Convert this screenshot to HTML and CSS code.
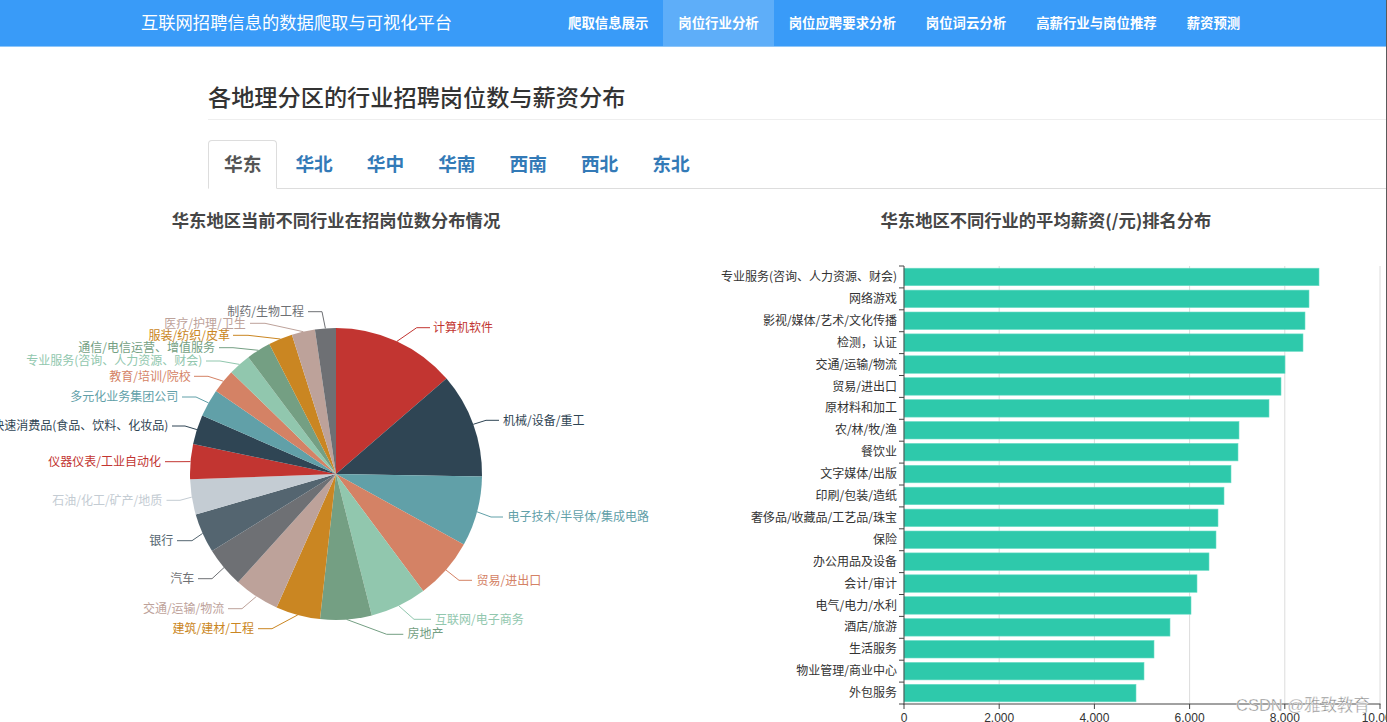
FILE: index.html
```html
<!DOCTYPE html>
<html lang="zh-CN">
<head>
<meta charset="utf-8">
<title>岗位行业分析</title>
<link rel="stylesheet" href="styles.css">
</head>
<body>
<div class="page">
  <header class="topbar">
    <div class="brand">互联网招聘信息的数据爬取与可视化平台</div>
    <nav class="nav">
      <a class="nav-item">爬取信息展示</a>
      <a class="nav-item active">岗位行业分析</a>
      <a class="nav-item">岗位应聘要求分析</a>
      <a class="nav-item">岗位词云分析</a>
      <a class="nav-item">高薪行业与岗位推荐</a>
      <a class="nav-item">薪资预测</a>
    </nav>
  </header>

  <main class="content">
    <h3 class="page-title">各地理分区的行业招聘岗位数与薪资分布</h3>
    <ul class="tabs">
      <li class="tab active"><a>华东</a></li>
      <li class="tab"><a>华北</a></li>
      <li class="tab"><a>华中</a></li>
      <li class="tab"><a>华南</a></li>
      <li class="tab"><a>西南</a></li>
      <li class="tab"><a>西北</a></li>
      <li class="tab"><a>东北</a></li>
    </ul>
  </main>

  <section class="charts">
    <svg class="chart chart-pie" width="691" height="534" viewBox="0 188 691 534">
      <text class="chart-title" x="336" y="221">华东地区当前不同行业在招岗位数分布情况</text>
      <g class="slices">
        <path fill="#c23531" d="M336 473 L336 327 A146 146 0 0 1 446.5 377.6 Z"/>
        <path fill="#2f4554" d="M336 473 L446.5 377.6 A146 146 0 0 1 482 475.5 Z"/>
        <path fill="#61a0a8" d="M336 473 L482 475.5 A146 146 0 0 1 463.8 543.6 Z"/>
        <path fill="#d48265" d="M336 473 L463.8 543.6 A146 146 0 0 1 423.2 590.1 Z"/>
        <path fill="#91c7ae" d="M336 473 L423.2 590.1 A146 146 0 0 1 371.8 614.5 Z"/>
        <path fill="#749f83" d="M336 473 L371.8 614.5 A146 146 0 0 1 320 618.1 Z"/>
        <path fill="#ca8622" d="M336 473 L320 618.1 A146 146 0 0 1 276.6 606.4 Z"/>
        <path fill="#bda29a" d="M336 473 L276.6 606.4 A146 146 0 0 1 238.1 581.3 Z"/>
        <path fill="#6e7074" d="M336 473 L238.1 581.3 A146 146 0 0 1 212 550.1 Z"/>
        <path fill="#546570" d="M336 473 L212 550.1 A146 146 0 0 1 195.7 513.5 Z"/>
        <path fill="#c4ccd3" d="M336 473 L195.7 513.5 A146 146 0 0 1 190.1 478.3 Z"/>
        <path fill="#c23531" d="M336 473 L190.1 478.3 A146 146 0 0 1 193.1 443.1 Z"/>
        <path fill="#2f4554" d="M336 473 L193.1 443.1 A146 146 0 0 1 202.2 414.6 Z"/>
        <path fill="#61a0a8" d="M336 473 L202.2 414.6 A146 146 0 0 1 216 389.9 Z"/>
        <path fill="#d48265" d="M336 473 L216 389.9 A146 146 0 0 1 231.3 371.2 Z"/>
        <path fill="#91c7ae" d="M336 473 L231.3 371.2 A146 146 0 0 1 248.3 356.2 Z"/>
        <path fill="#749f83" d="M336 473 L248.3 356.2 A146 146 0 0 1 269.3 343.1 Z"/>
        <path fill="#ca8622" d="M336 473 L269.3 343.1 A146 146 0 0 1 291.9 333.8 Z"/>
        <path fill="#bda29a" d="M336 473 L291.9 333.8 A146 146 0 0 1 314.9 328.5 Z"/>
        <path fill="#6e7074" d="M336 473 L314.9 328.5 A146 146 0 0 1 336 327 Z"/>
      </g>
      <g class="leaders">
        <polyline stroke="#c23531" points="397,340.3 416.7,326.7 430,326.7"/>
        <polyline stroke="#2f4554" points="473.3,423.3 486,419.3 499,419.3"/>
        <polyline stroke="#61a0a8" points="477,510.8 491,516 503,516"/>
        <polyline stroke="#d48265" points="446,569 459,579.3 472,579.3"/>
        <polyline stroke="#91c7ae" points="398.8,604.8 414,618.3 431,618.3"/>
        <polyline stroke="#749f83" points="346.5,618.4 386.7,633.3 403.3,633.3"/>
        <polyline stroke="#ca8622" points="297.8,613.9 272,627.7 258,627.7"/>
        <polyline stroke="#bda29a" points="256.4,595.4 242,607.7 228,607.7"/>
        <polyline stroke="#6e7074" points="224,566.6 212,577.7 198,577.7"/>
        <polyline stroke="#546570" points="202.6,532.4 192,539.7 177,539.7"/>
        <polyline stroke="#c4ccd3" points="191.8,496.1 180,499.3 166.5,499.3"/>
        <polyline stroke="#c23531" points="190.5,460.6 179,460.7 165,460.7"/>
        <polyline stroke="#2f4554" points="196.9,428.6 185,425 172,425"/>
        <polyline stroke="#61a0a8" points="208.5,401.9 196,396 182,396"/>
        <polyline stroke="#d48265" points="223.3,380.2 208,375.3 194,375.3"/>
        <polyline stroke="#91c7ae" points="239.5,363.4 220,360 206,360"/>
        <polyline stroke="#749f83" points="258.5,349.3 233,346.7 219,346.7"/>
        <polyline stroke="#ca8622" points="280.4,338 248,334.3 233,334.3"/>
        <polyline stroke="#bda29a" points="303.3,330.7 265,322.3 250,322.3"/>
        <polyline stroke="#6e7074" points="325.4,327.4 322,310.7 308,310.7"/>
      </g>
      <g class="pie-labels">
        <text class="lbl-r" fill="#c23531" x="433" y="327">计算机软件</text>
        <text class="lbl-r" fill="#2f4554" x="503" y="419.5">机械/设备/重工</text>
        <text class="lbl-r" fill="#61a0a8" x="507.5" y="516">电子技术/半导体/集成电路</text>
        <text class="lbl-r" fill="#d48265" x="476.5" y="579.5">贸易/进出口</text>
        <text class="lbl-r" fill="#91c7ae" x="435" y="618.5">互联网/电子商务</text>
        <text class="lbl-r" fill="#749f83" x="407.5" y="633">房地产</text>
        <text class="lbl-l" fill="#ca8622" x="254" y="628">建筑/建材/工程</text>
        <text class="lbl-l" fill="#bda29a" x="224.3" y="608">交通/运输/物流</text>
        <text class="lbl-l" fill="#6e7074" x="194.3" y="578">汽车</text>
        <text class="lbl-l" fill="#546570" x="173.3" y="540">银行</text>
        <text class="lbl-l" fill="#c4ccd3" x="162.3" y="499.5">石油/化工/矿产/地质</text>
        <text class="lbl-l" fill="#c23531" x="161" y="461">仪器仪表/工业自动化</text>
        <text class="lbl-l" fill="#2f4554" x="168.3" y="425">快速消费品(食品、饮料、化妆品)</text>
        <text class="lbl-l" fill="#61a0a8" x="178.3" y="396">多元化业务集团公司</text>
        <text class="lbl-l" fill="#d48265" x="190.7" y="375.5">教育/培训/院校</text>
        <text class="lbl-l" fill="#91c7ae" x="202.3" y="360">专业服务(咨询、人力资源、财会)</text>
        <text class="lbl-l" fill="#749f83" x="215" y="347">通信/电信运营、增值服务</text>
        <text class="lbl-l" fill="#ca8622" x="230" y="334.5">服装/纺织/皮革</text>
        <text class="lbl-l" fill="#bda29a" x="245.7" y="322.5">医疗/护理/卫生</text>
        <text class="lbl-l" fill="#6e7074" x="304" y="311">制药/生物工程</text>
      </g>
    </svg>

    <svg class="chart chart-bar" width="696" height="534" viewBox="691 188 696 534">
      <text class="chart-title" x="1046" y="221">华东地区不同行业的平均薪资(/元)排名分布</text>
      <g class="grid">
        <line x1="999.2" y1="265" x2="999.2" y2="703"/>
        <line x1="1094.4" y1="265" x2="1094.4" y2="703"/>
        <line x1="1189.6" y1="265" x2="1189.6" y2="703"/>
        <line x1="1284.8" y1="265" x2="1284.8" y2="703"/>
        <line x1="1380" y1="265" x2="1380" y2="703"/>
      </g>
      <g class="bars">
        <rect x="904" y="267.2" width="415" height="17.5"/>
        <rect x="904" y="289.1" width="405" height="17.5"/>
        <rect x="904" y="311.0" width="401" height="17.5"/>
        <rect x="904" y="332.9" width="399" height="17.5"/>
        <rect x="904" y="354.8" width="381" height="17.5"/>
        <rect x="904" y="376.7" width="377" height="17.5"/>
        <rect x="904" y="398.6" width="365" height="17.5"/>
        <rect x="904" y="420.5" width="335" height="17.5"/>
        <rect x="904" y="442.4" width="334" height="17.5"/>
        <rect x="904" y="464.3" width="327" height="17.5"/>
        <rect x="904" y="486.2" width="320" height="17.5"/>
        <rect x="904" y="508.1" width="314" height="17.5"/>
        <rect x="904" y="530.0" width="312" height="17.5"/>
        <rect x="904" y="551.9" width="305" height="17.5"/>
        <rect x="904" y="573.8" width="293" height="17.5"/>
        <rect x="904" y="595.7" width="287" height="17.5"/>
        <rect x="904" y="617.6" width="266" height="17.5"/>
        <rect x="904" y="639.5" width="250" height="17.5"/>
        <rect x="904" y="661.4" width="240" height="17.5"/>
        <rect x="904" y="683.3" width="232" height="17.5"/>
      </g>
      <g class="axis">
        <line x1="904" y1="265" x2="904" y2="703.5"/>
        <line x1="903.5" y1="703" x2="1380.5" y2="703"/>
        <path d="M899 265H904M899 286.9H904M899 308.8H904M899 330.7H904M899 352.6H904M899 374.5H904M899 396.4H904M899 418.3H904M899 440.2H904M899 462.1H904M899 484H904M899 505.9H904M899 527.8H904M899 549.7H904M899 571.6H904M899 593.5H904M899 615.4H904M899 637.3H904M899 659.2H904M899 681.1H904M899 703H904"/>
        <path d="M904 703V708M999.2 703V708M1094.4 703V708M1189.6 703V708M1284.8 703V708M1380 703V708"/>
      </g>
      <g class="cat-labels">
        <text x="897" y="276.0">专业服务(咨询、人力资源、财会)</text>
        <text x="897" y="297.9">网络游戏</text>
        <text x="897" y="319.8">影视/媒体/艺术/文化传播</text>
        <text x="897" y="341.7">检测，认证</text>
        <text x="897" y="363.6">交通/运输/物流</text>
        <text x="897" y="385.5">贸易/进出口</text>
        <text x="897" y="407.4">原材料和加工</text>
        <text x="897" y="429.3">农/林/牧/渔</text>
        <text x="897" y="451.2">餐饮业</text>
        <text x="897" y="473.1">文字媒体/出版</text>
        <text x="897" y="495.0">印刷/包装/造纸</text>
        <text x="897" y="516.9">奢侈品/收藏品/工艺品/珠宝</text>
        <text x="897" y="538.8">保险</text>
        <text x="897" y="560.7">办公用品及设备</text>
        <text x="897" y="582.6">会计/审计</text>
        <text x="897" y="604.5">电气/电力/水利</text>
        <text x="897" y="626.4">酒店/旅游</text>
        <text x="897" y="648.3">生活服务</text>
        <text x="897" y="670.2">物业管理/商业中心</text>
        <text x="897" y="692.1">外包服务</text>
      </g>
      <g class="val-labels">
        <text x="904" y="716.5">0</text>
        <text x="999.2" y="716.5">2,000</text>
        <text x="1094.4" y="716.5">4,000</text>
        <text x="1189.6" y="716.5">6,000</text>
        <text x="1284.8" y="716.5">8,000</text>
        <text x="1380" y="716.5">10,000</text>
      </g>
      <text class="watermark" x="1236" y="710">CSDN @雅致教育</text>
    </svg>
  </section>
</div>
</body>
</html>
```

FILE: styles.css
```css
* { box-sizing: border-box; }

html, body {
  margin: 0;
  padding: 0;
  background: #fff;
}

body {
  font-family: "Noto Sans CJK SC", "Liberation Sans", sans-serif;
  color: #333;
  overflow: hidden;
}

.page {
  width: 1387px;
  height: 722px;
  overflow: hidden;
  border-right: 1px solid #5a5a5a;
}

/* ---------- top bar ---------- */
.topbar {
  display: flex;
  align-items: stretch;
  height: 47px;
  background: #399bf8;
  border-bottom: 1px solid #8ec6f9;
  padding-left: 141px;
}

.brand {
  width: 412px;
  display: flex;
  align-items: center;
  color: #fff;
  font-size: 17.3px;
  padding-bottom: 3px;
}

.nav {
  display: flex;
}

.nav-item {
  display: flex;
  align-items: center;
  padding: 0 15px 3px;
  color: #fff;
  font-size: 13.4px;
  font-weight: bold;
  white-space: nowrap;
}

.nav-item.active {
  background: #5eaef9;
}

/* ---------- content ---------- */
.content {
  padding-left: 208px;
}

.page-title {
  margin: 34px 0 0;
  padding-bottom: 8px;
  line-height: 30px;
  font-size: 23.2px;
  font-weight: 500;
  color: #333;
  border-bottom: 1px solid #eee;
}

.tabs {
  display: flex;
  list-style: none;
  margin: 20px 0 0;
  padding: 0;
  border-bottom: 1px solid #ddd;
}

.tab {
  margin-right: 2px;
  margin-bottom: -1px;
}

.tab a {
  display: block;
  padding: 8px 15px 12px;
  line-height: 27px;
  font-size: 18.7px;
  font-weight: bold;
  color: #337ab7;
  border: 1px solid transparent;
  border-radius: 4px 4px 0 0;
}

.tab.active a {
  color: #555;
  background: #fff;
  border-color: #ddd #ddd transparent;
}

/* ---------- charts ---------- */
.charts {
  display: flex;
}

.chart {
  display: block;
  flex: none;
  overflow: hidden;
}

.chart text {
  font-family: "Noto Sans CJK SC", "Liberation Sans", sans-serif;
  font-size: 12px;
  dominant-baseline: central;
  transform: translateY(-1.5px);
}

.chart .chart-title {
  font-size: 17.3px;
  font-weight: bold;
  fill: #464646;
  text-anchor: middle;
  transform: translateY(-2.5px);
}

.leaders polyline {
  fill: none;
  stroke-width: 1;
}

.lbl-r { text-anchor: start; }
.lbl-l { text-anchor: end; }

.grid line {
  stroke: #dcdcdc;
  stroke-width: 1;
}

.bars rect {
  fill: #2ec9ab;
  stroke: #6cdcc6;
  stroke-width: 0.6;
}

.axis line,
.axis path {
  stroke: #444;
  stroke-width: 1;
  fill: none;
}

.cat-labels text {
  text-anchor: end;
  fill: #333;
}

.chart .val-labels text {
  font-family: "Liberation Sans", "Noto Sans CJK SC", sans-serif;
  text-anchor: middle;
  fill: #333;
  transform: none;
}

.chart .watermark {
  font-family: "Liberation Sans", "Noto Sans CJK SC", sans-serif;
  font-size: 16.5px;
  dominant-baseline: auto;
  fill: #8d8d8d;
  stroke: #fff;
  stroke-width: 0.4;
  transform: none;
}
```
